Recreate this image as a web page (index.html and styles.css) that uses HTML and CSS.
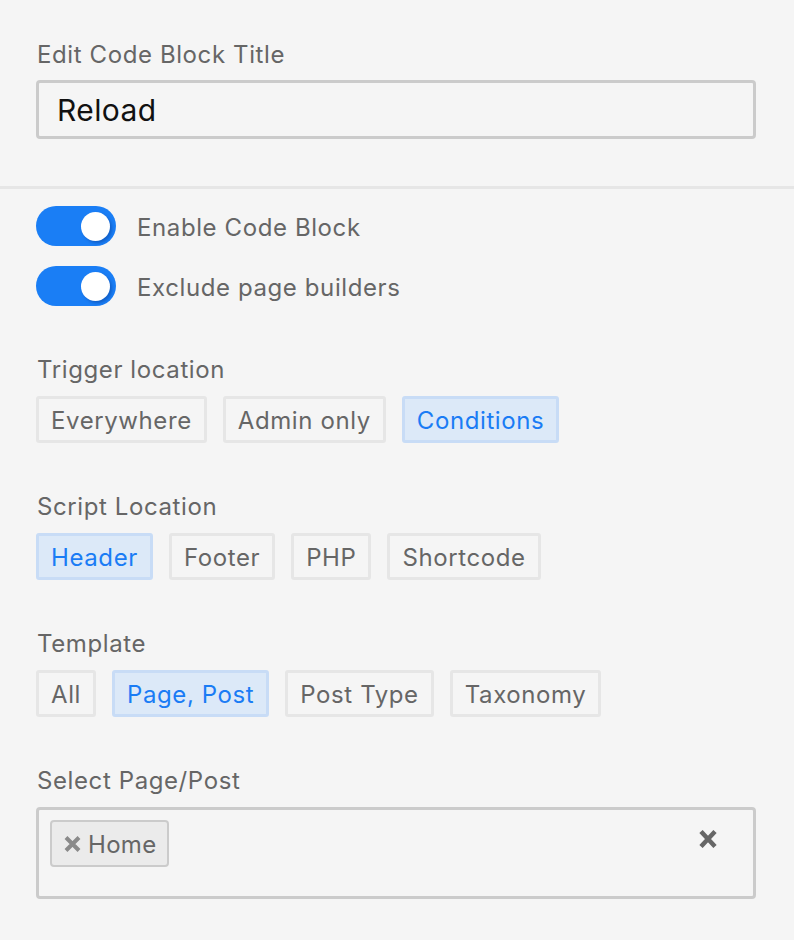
FILE: index.html
```html
<!DOCTYPE html>
<html>
<head>
<meta charset="utf-8">
<link rel="stylesheet" href="styles.css">
</head>
<body>
<div class="panel">
  <section class="title-sec">
    <div class="label">Edit Code Block Title</div>
    <div class="text-input">Reload</div>
  </section>
  <div class="divider"></div>
  <section class="opts">
    <div class="toggle-row">
      <span class="toggle"><span class="knob"></span></span>
      <span class="toggle-text">Enable Code Block</span>
    </div>
    <div class="toggle-row second">
      <span class="toggle"><span class="knob"></span></span>
      <span class="toggle-text">Exclude page builders</span>
    </div>

    <div class="group">
      <div class="label">Trigger location</div>
      <div class="btns">
        <span class="btn">Everywhere</span>
        <span class="btn">Admin only</span>
        <span class="btn active">Conditions</span>
      </div>
    </div>

    <div class="group">
      <div class="label">Script Location</div>
      <div class="btns">
        <span class="btn active">Header</span>
        <span class="btn">Footer</span>
        <span class="btn">PHP</span>
        <span class="btn">Shortcode</span>
      </div>
    </div>

    <div class="group">
      <div class="label">Template</div>
      <div class="btns">
        <span class="btn">All</span>
        <span class="btn active">Page, Post</span>
        <span class="btn">Post Type</span>
        <span class="btn">Taxonomy</span>
      </div>
    </div>

    <div class="group">
      <div class="label">Select Page/Post</div>
      <div class="select-box">
        <span class="tag">
          <svg class="tag-x" width="19" height="16" viewBox="0 0 19 16"><path d="M3 1.5 L16 14.5 M16 1.5 L3 14.5" stroke="#8a8a8a" stroke-width="4" stroke-linecap="butt"/></svg>
          <span class="tag-text">Home</span>
        </span>
        <svg class="clear-x" width="20" height="18" viewBox="0 0 20 18"><path d="M3 1.5 L17 16.5 M17 1.5 L3 16.5" stroke="#666" stroke-width="4.5" stroke-linecap="butt"/></svg>
      </div>
    </div>
  </section>
</div>
</body>
</html>
```
FILE: styles.css
```css
html, body {
  margin: 0;
  padding: 0;
  background: #f5f5f5;
}
body {
  font-family: Inter, "Liberation Sans", sans-serif;
  color: #666;
  font-size: 24px;
  letter-spacing: 0.6px;
}
.panel {
  width: 794px;
}
.title-sec {
  padding: 39px 38px 0 36px;
}
.label {
  font-size: 24px;
  line-height: 30px;
  height: 30px;
  padding-top: 1px;
  margin-bottom: -1px;
  color: #666;
  padding-left: 1px;
}
.text-input {
  margin-top: 11px;
  box-sizing: border-box;
  height: 59px;
  border: 3px solid #cbcbcb;
  border-radius: 4px;
  padding: 0 18px;
  line-height: 55px;
  font-size: 30px;
  letter-spacing: 0.4px;
  color: #111;
}
.divider {
  margin-top: 47px;
  height: 3px;
  background: #e6e6e6;
}
.opts {
  padding: 17px 38px 0 36px;
}
.toggle-row {
  display: flex;
  align-items: center;
  gap: 21px;
  height: 40px;
}
.toggle-row.second {
  margin-top: 20px;
}
.toggle {
  position: relative;
  width: 80px;
  height: 40px;
  border-radius: 20px;
  background: #1a7ef5;
  flex: none;
}
.knob {
  position: absolute;
  right: 6px;
  top: 6px;
  width: 29px;
  height: 29px;
  border-radius: 50%;
  background: #fff;
  box-shadow: 2px 2px 3px rgba(0, 40, 120, 0.35);
}
.toggle-text {
  font-size: 24px;
  color: #666;
  padding-top: 2px;
}
.group {
  margin-top: 48px;
}
.btns {
  margin-top: 12px;
  display: flex;
  gap: 16px;
}
.btn {
  box-sizing: border-box;
  height: 47px;
  line-height: 39px;
  padding: 2px 12px 0;
  border: 3px solid #e6e6e6;
  border-radius: 3px;
  color: #666;
  font-size: 24px;
}
.btn.active {
  background: #dce9f8;
  border-color: #c8dcf6;
  color: #1a7cf5;
}
.select-box {
  margin-top: 12px;
  box-sizing: border-box;
  height: 92px;
  border: 3px solid #cbcbcb;
  border-radius: 4px;
  padding: 10px 11px;
  display: flex;
  align-items: flex-start;
  justify-content: space-between;
}
.tag {
  box-sizing: border-box;
  height: 47px;
  width: 119px;
  display: flex;
  align-items: center;
  gap: 6px;
  padding: 2px 8px 0 11px;
  background: #ebebeb;
  border: 2px solid #cbcbcb;
  border-radius: 4px;
}
.tag-x {
  flex: none;
  margin-top: -2px;
}
.tag-text {
  font-size: 24px;
  letter-spacing: 0.3px;
  color: #666;
}
.clear-x {
  margin-top: 10px;
  margin-right: 24px;
}
```
